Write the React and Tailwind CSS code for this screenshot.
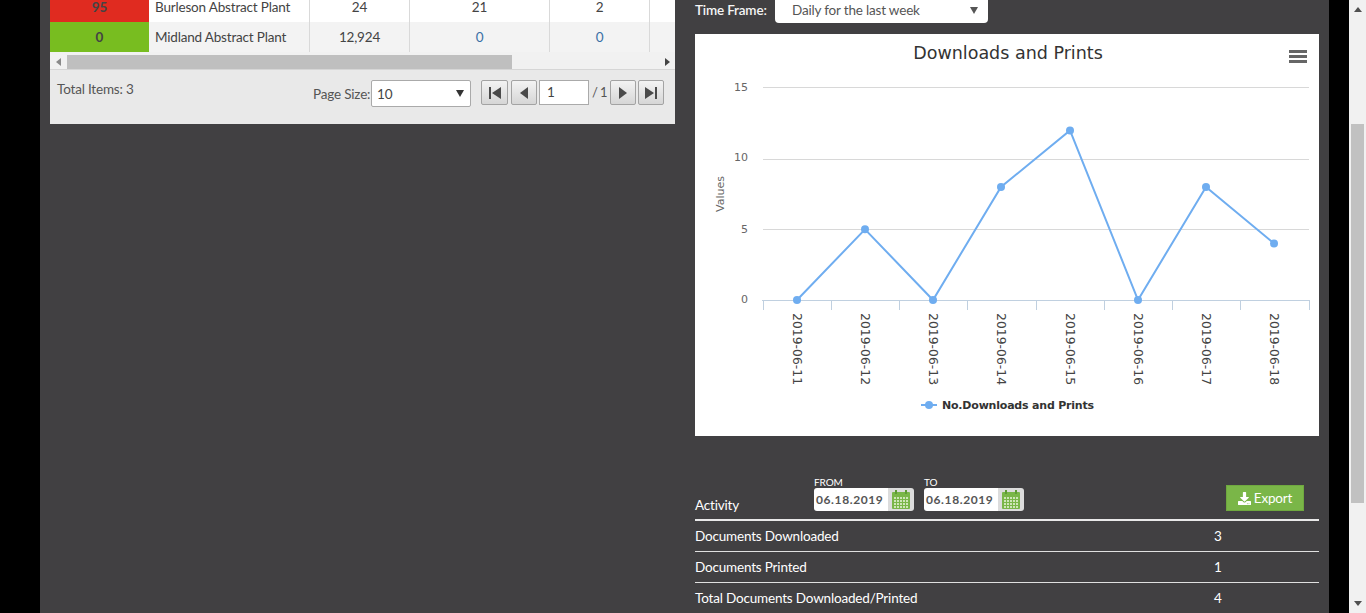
import React from "react";
import { FaDownload } from "react-icons/fa";

const F = { fontFamily: "Lato, 'Open Sans', sans-serif" };

function Calendar() {
  return (
    <svg width="18" height="19" viewBox="0 0 18 19">
      <rect x="0" y="2" width="18" height="17" rx="1" fill="#7ab648" />
      <rect x="3" y="0" width="2" height="4" fill="#5f9a35" />
      <rect x="13" y="0" width="2" height="4" fill="#5f9a35" />
      <g fill="#cfe5b8">
        {[7, 10, 13, 16].map((y) =>
          [2, 5, 8, 11, 14].map((x) => <rect key={x + "-" + y} x={x} y={y} width="2" height="2" />)
        )}
      </g>
    </svg>
  );
}

function DateField({ label, value }) {
  return (
    <div className="w-[100px]">
      <div className="text-[10px] leading-[12px] text-white h-[12px] -mt-[6px] tracking-[-0.1px]">{label}</div>
      <div className="flex h-[23px]">
        <div className="w-[74px] bg-white rounded-l-[3px] text-[12px] font-bold text-[#555] pl-[2px] flex items-center tracking-[0.6px]">{value}</div>
        <div className="w-[26px] bg-[#dcdcdc] rounded-r-[3px] flex items-center justify-center"><Calendar /></div>
      </div>
    </div>
  );
}

function PagerBtn({ d, w = "w-[27px]" }) {
  return (
    <button className={`${w} h-[25px] border border-[#a3a3a3] rounded-[2px] bg-gradient-to-b from-[#f3f3f3] to-[#d6d6d6] flex items-center justify-center`}>
      <svg width="16" height="12" viewBox="0 0 16 12" fill="#4a4a4a"><path d={d} /></svg>
    </button>
  );
}

function Cell({ w, children, border = true, left, pb }) {
  return (
    <div className={`${w} shrink-0 h-full flex items-center text-[13.5px] tracking-[-0.18px] text-[#444] ${pb} ${left ? "pl-[6px]" : "justify-center"} ${border ? "border-r border-[#d9d9d9]" : ""}`}>{children}</div>
  );
}

function Row({ color, num, name, a, b, c, bg, h, pb, tone }) {
  return (
    <div className={`flex ${h} ${bg}`}>
      <div className={`w-[99px] shrink-0 h-full ${color} flex items-center justify-center text-[13.5px] font-bold text-[#444] ${pb}`}>{num}</div>
      <Cell w="w-[161px]" left pb={pb}>{name}</Cell>
      <Cell w="w-[100px]" pb={pb}>{a}</Cell>
      <Cell w="w-[140px]" pb={pb}><span className={tone}>{b}</span></Cell>
      <Cell w="w-[100px]" pb={pb}><span className={tone}>{c}</span></Cell>
      <div className="flex-1" />
    </div>
  );
}

function Chart() {
  const pts = [[797, 0], [865, 5], [933, 0], [1001, 8], [1070, 12], [1138, 0], [1206, 8], [1274, 4]];
  const ox = 695, oy = 34;
  const py = (v) => 300 - v * 14.13 - oy;
  const dates = ["11", "12", "13", "14", "15", "16", "17", "18"];
  const font = "'DejaVu Sans', sans-serif";
  const line = "#6fadf0";
  return (
    <svg width="624" height="402" viewBox="0 0 624 402" className="block">
      <rect width="624" height="402" fill="#fff" />
      <text x="313" y="25" textAnchor="middle" fontSize="17.5" fill="#333" fontFamily={font}>Downloads and Prints</text>
      <g fill="#666">
        <rect x="594" y="16" width="18" height="3" />
        <rect x="594" y="21" width="18" height="3" />
        <rect x="594" y="26" width="18" height="3" />
      </g>
      {[[15, 87, 4], [10, 159, 2], [5, 229, 4]].map(([v, y, d]) => (
        <g key={v}>
          <line x1="68" x2="614" y1={y - oy + 0.5} y2={y - oy + 0.5} stroke="#d8d8d8" />
          <text x="53" y={y - oy + d} textAnchor="end" fontSize="11" fill="#666" fontFamily={font}>{v}</text>
        </g>
      ))}
      <text x="53" y={300 - oy + 3} textAnchor="end" fontSize="11" fill="#666" fontFamily={font}>0</text>
      <text transform={`translate(29 160) rotate(-90)`} textAnchor="middle" fontSize="11" fill="#666" fontFamily={font}>Values</text>
      <line x1="67" x2="615" y1="266.5" y2="266.5" stroke="#c0d0e0" />
      {Array.from({ length: 9 }).map((_, i) => {
        const x = Math.round(67.5 + i * 68.25) + 0.5;
        return <line key={i} x1={x} x2={x} y1="266" y2="276" stroke="#c0d0e0" />;
      })}
      {pts.map(([x], i) => (
        <text key={i} transform={`translate(${x - ox - 4} 279) rotate(90)`} fontSize="12.4" fill="#444" fontFamily={font}>{"2019-06-" + dates[i]}</text>
      ))}
      <polyline fill="none" stroke={line} strokeWidth="2" points={pts.map(([x, v]) => `${x - ox},${py(v)}`).join(" ")} />
      {pts.map(([x, v], i) => <circle key={i} cx={x - ox} cy={py(v)} r="4" fill={line} />)}
      <line x1="226" x2="242" y1="371" y2="371" stroke={line} strokeWidth="2" />
      <circle cx="234" cy="371" r="4" fill={line} />
      <text x="247" y="375" fontSize="11" letterSpacing="-0.2" fontWeight="bold" fill="#333" fontFamily={font}>No.Downloads and Prints</text>
    </svg>
  );
}

export default function App() {
  return (
    <div className="flex h-[613px] w-[1366px] overflow-hidden bg-black" style={F}>
      <div className="w-[40px] shrink-0 bg-black" />
      <main className="w-[1289px] shrink-0 bg-[#414042] flex pl-[10px] pr-[10px] gap-[20px]">
        <section className="w-[625px] shrink-0 self-start">
          <div className="bg-[#f1f1f1]">
            <Row color="bg-[#e02b20]" num="95" name="Burleson Abstract Plant" a="24" b="21" c="2" bg="bg-white" h="h-[22px]" pb="pb-[8px]" tone="text-[#444]" />
            <Row color="bg-[#78bd20]" num="0" name="Midland Abstract Plant" a="12,924" b="0" c="0" bg="bg-[#f3f3f3]" h="h-[30px]" pb="pb-0" tone="text-[#3a6ea5]" />
          </div>
          <div className="h-[2px] bg-[#f1f1f1]" />
          <div className="flex items-center h-[15px] bg-[#f1f1f1]">
            <div className="w-[17px] flex justify-center">
              <svg width="5" height="8" viewBox="0 0 5 8" fill="#8a8a8a"><path d="M5 0v8L0 4z" /></svg>
            </div>
            <div className="w-[445px] h-[14px] bg-[#bfbfbf]" />
            <div className="flex-1 flex justify-end pr-[5px]">
              <svg width="5" height="8" viewBox="0 0 5 8" fill="#444"><path d="M0 0v8l5-4z" /></svg>
            </div>
          </div>
          <div className="h-[55px] bg-[#e9e9e9] border-t border-[#d6d6d6] flex text-[13.5px] tracking-[-0.18px] text-[#555]">
            <div className="pl-[7px] pt-[10px] w-[263px] leading-[18px]">Total Items: 3</div>
            <div className="flex pt-[10px] items-start">
              <span className="leading-[18px] mt-[5px] w-[58px] whitespace-nowrap">Page Size:</span>
              <div className="w-[100px] h-[27px] bg-white border border-[#aaa] rounded-[2px] flex items-center justify-between pl-[5px] pr-[6px] text-[#444]">
                <span className="pt-[2px]">10</span>
                <svg width="8" height="7" viewBox="0 0 8 7" fill="#333"><path d="M0 0h8L4 7z" /></svg>
              </div>
              <div className="ml-[10px] flex items-center gap-[3px]">
                <PagerBtn d="M2 0h2v12H2zM14 0v12L5 6z" />
                <PagerBtn w="w-[26px]" d="M12 0v12L4 6z" />
                <div className="w-[50px] h-[25px] bg-white border border-[#aaa] flex items-center pl-[7px] text-[#444] -ml-px">1</div>
                <span className="w-[15px] whitespace-nowrap text-[13px] tracking-[-0.6px]">/ 1</span>
                <PagerBtn w="w-[26px]" d="M4 0v12l8-6z" />
                <div className="-ml-px"><PagerBtn w="w-[26px]" d="M2 0v12l9-6zM12 0h2v12h-2z" /></div>
              </div>
            </div>
          </div>
        </section>

        <section className="w-[624px] shrink-0 text-white">
          <div className="flex items-start h-[34px]">
            <div className="w-[80px] text-[13.5px] tracking-[-0.18px] font-semibold leading-[20px] h-[20px] text-[#f5f5f5]">Time Frame:</div>
            <div className="w-[213px] h-[23px] bg-white rounded-b-[4px] flex items-center justify-between pl-[17px] pr-[10px] pb-[2px] text-[13.5px] tracking-[-0.18px] text-[#555]">
              <span>Daily for the last week</span>
              <svg width="8" height="7" viewBox="0 0 8 7" fill="#555"><path d="M0 0h8L4 7z" /></svg>
            </div>
          </div>
          <Chart />
          <div className="h-[85px] border-b-2 border-[#e8e8e8] flex items-end pb-[4px]">
            <div className="w-[119px] text-[13.5px] tracking-[-0.18px] leading-[20px]">Activity</div>
            <div className="flex gap-[10px] mb-[4px]">
              <DateField label="FROM" value="06.18.2019" />
              <DateField label="TO" value="06.18.2019" />
            </div>
            <div className="ml-auto mr-[15px] mb-[4px] w-[78px] h-[26px] bg-[#7ab648] border border-[#6fa83f] flex items-center justify-center gap-[3px] text-[13.5px] tracking-[-0.18px]">
              <FaDownload className="text-[13px]" /> Export
            </div>
          </div>
          {[["Documents Downloaded", "3"], ["Documents Printed", "1"], ["Total Documents Downloaded/Printed", "4"]].map(([t, v], i) => (
            <div key={t} className={`h-[31px] flex items-center text-[13.5px] tracking-[-0.18px] ${i < 2 ? "border-b border-[#e0e0e0]" : ""}`}>
              <div className="w-[519px]">{t}</div>
              <div>{v}</div>
            </div>
          ))}
        </section>
      </main>
      <div className="w-[20px] shrink-0 bg-black" />
      <div className="w-[17px] shrink-0 bg-[#f1f1f1] relative">
        <svg className="absolute left-[5px] top-[7px]" width="8" height="5" viewBox="0 0 8 5" fill="#505050"><path d="M0 5h8L4 0z" /></svg>
        <div className="absolute left-[2px] top-[124px] w-[13px] h-[379px] bg-[#c1c1c1]" />
        <svg className="absolute left-[5px] top-[601px]" width="8" height="5" viewBox="0 0 8 5" fill="#505050"><path d="M0 0h8L4 5z" /></svg>
      </div>
    </div>
  );
}
